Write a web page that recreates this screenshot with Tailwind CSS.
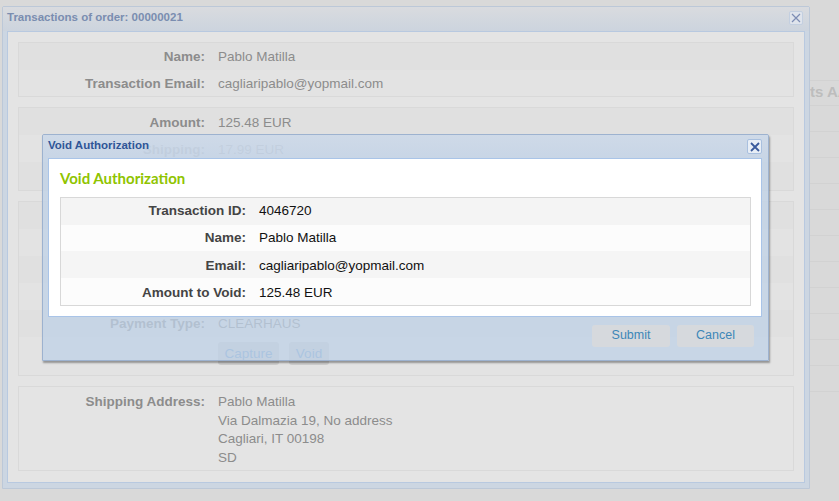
<!DOCTYPE html>
<html>
<head>
  <meta charset="UTF-8">
  <title>Void Authorization</title>
  <script src="https://cdn.jsdelivr.net/npm/@tailwindcss/browser@4"></script>
</head>
<body class="relative w-[839px] h-[501px] overflow-hidden bg-[#d9d9d9] font-['Liberation_Sans',Arial,sans-serif] text-[13.5px]">
  <!-- Page behind the dialogs -->
  <div class="absolute left-[790px] top-[80px] w-[49px]">
    <div class="h-[26px] pl-[20px] border-t border-b border-[#d2d2d2] whitespace-nowrap overflow-hidden font-bold text-[15px] text-[#bdbdbd] leading-[22px]">ts AA</div>
    <div class="h-[26px] border-b border-[#d2d2d2]"></div>
    <div class="h-[26px] border-b border-[#d2d2d2]"></div>
    <div class="h-[26px] border-b border-[#d2d2d2]"></div>
    <div class="h-[26px] border-b border-[#d2d2d2]"></div>
    <div class="h-[26px] border-b border-[#d2d2d2]"></div>
    <div class="h-[26px] border-b border-[#d2d2d2]"></div>
    <div class="h-[26px] border-b border-[#d2d2d2]"></div>
    <div class="h-[26px] border-b border-[#d2d2d2]"></div>
    <div class="h-[26px] border-b border-[#d2d2d2]"></div>
    <div class="h-[26px] border-b border-[#d2d2d2]"></div>
    <div class="h-[26px] border-b border-[#d2d2d2]"></div>
  </div>

  <!-- Transactions dialog -->
  <div class="absolute left-[2px] top-[6px] w-[808px] h-[483px] flex flex-col rounded-t-[2px] border border-[#bcc8d8] bg-[#ccd6e2] px-[4px] pb-[5px]">
    <div class="h-[24px] -mx-[4px] px-[4px] pt-[3px] bg-gradient-to-b from-[#d9dbdf] to-[#ccd4de] flex items-start justify-between">
      <span class="text-[11.5px] leading-[14px] font-bold text-[#7a8db0]">Transactions of order: 00000021</span>
      <span class="mr-[2px] mt-[1px] w-[14px] h-[14px] rounded-[2px] border border-[#c3cfe0] bg-[#dfe4ec] flex items-center justify-center">
        <svg class="w-[10px] h-[10px]" viewBox="0 0 10 10" fill="none" stroke="#7d8db4" stroke-width="1.2"><path d="M1 1l8 8M9 1l-8 8"/></svg>
      </span>
    </div>
    <div class="flex-1 border border-[#b8c9e0] bg-[#e4e4e4] px-[10px] pt-[10px] flex flex-col gap-[10px] text-[#8c8c8c]">
      <div class="border border-[#d9d9d9] flex flex-col">
        <div class="h-[27px] pt-[2px] bg-[#e0e0e0] flex items-center"><b class="w-[186px] text-right">Name:</b><span class="ml-[13px]">Pablo Matilla</span></div>
        <div class="h-[26px] pt-[3px] bg-[#e3e3e3] flex items-center"><b class="w-[186px] text-right">Transaction Email:</b><span class="ml-[13px]">cagliaripablo@yopmail.com</span></div>
      </div>
      <div class="border border-[#d9d9d9] flex flex-col">
        <div class="h-[27px] pt-[3px] bg-[#e0e0e0] flex items-center"><b class="w-[186px] text-right">Amount:</b><span class="ml-[13px]">125.48 EUR</span></div>
        <div class="h-[27px] pt-[3px] bg-[#e3e3e3] flex items-center"><b class="w-[186px] text-right">Shipping:</b><span class="ml-[13px]">17.99 EUR</span></div>
        <div class="h-[28px] bg-[#e0e0e0]"></div>
      </div>
      <div class="border border-[#d9d9d9] flex flex-col">
        <div class="h-[27px] bg-[#e0e0e0]"></div>
        <div class="h-[27px] bg-[#e3e3e3]"></div>
        <div class="h-[27px] bg-[#e0e0e0]"></div>
        <div class="h-[27px] bg-[#e3e3e3]"></div>
        <div class="h-[27px] pt-[2px] bg-[#e0e0e0] flex items-center"><b class="w-[186px] text-right">Payment Type:</b><span class="ml-[13px]">CLEARHAUS</span></div>
        <div class="h-[38px] bg-[#e3e3e3] pl-[199px] pt-[5px] flex gap-[10px] items-start">
          <span class="w-[61px] h-[23px] rounded-[3px] bg-[#cecece] text-center leading-[24px] text-[#6f9ccc]">Capture</span>
          <span class="w-[40px] h-[23px] rounded-[3px] bg-[#cecece] text-center leading-[24px] text-[#6f9ccc]">Void</span>
        </div>
      </div>
      <div class="border border-[#d9d9d9] h-[85px] flex pt-[6px] leading-[18.5px]">
        <b class="w-[186px] text-right">Shipping Address:</b>
        <div class="ml-[13px]">
          <p>Pablo Matilla</p>
          <p>Via Dalmazia 19, No address</p>
          <p>Cagliari, IT 00198</p>
          <p>SD</p>
        </div>
      </div>
    </div>
  </div>

  <!-- Void Authorization dialog -->
  <div class="absolute left-[42px] top-[134px] w-[727px] h-[227px] flex flex-col rounded-t-[2px] border border-[#9db2cf] bg-[#bfd1e7]/75 shadow-[1px_2px_2px_rgba(0,0,0,0.35)] pl-[5px] pr-[6px]">
    <div class="h-[23px] -ml-[5px] -mr-[6px] pl-[5px] pr-[6px] pt-[3px] bg-gradient-to-b from-[#d3dce9]/60 to-[#c8d5e6]/60 flex items-start justify-between">
      <span class="text-[11.5px] leading-[14px] font-bold text-[#2f5597]">Void Authorization</span>
      <span class="mt-[1px] w-[15px] h-[15px] rounded-[2px] border border-[#a9c0df] bg-[#e8eef6] flex items-center justify-center">
        <svg class="w-[10px] h-[10px]" viewBox="0 0 10 10" fill="none" stroke="#3a5a9c" stroke-width="1.8"><path d="M1 1l8 8M9 1l-8 8"/></svg>
      </span>
    </div>
    <div class="h-[159px] border border-[#a9c4e8] bg-white pl-[11px] pr-[10px]">
      <h2 class="h-[38px] leading-[38px] font-['Lato',sans-serif] font-bold text-[15px] text-[#8fc400]">Void Authorization</h2>
      <div class="border border-[#d8d8d8] text-[#111]">
        <div class="h-[27px] bg-[#f4f4f4] flex items-center"><b class="w-[185px] text-right text-[#444]">Transaction ID:</b><span class="ml-[13px]">4046720</span></div>
        <div class="h-[26px] bg-[#fcfcfc] flex items-center"><b class="w-[185px] text-right text-[#444]">Name:</b><span class="ml-[13px]">Pablo Matilla</span></div>
        <div class="h-[27px] pt-[3px] bg-[#f5f5f5] flex items-center"><b class="w-[185px] text-right text-[#444]">Email:</b><span class="ml-[13px]">cagliaripablo@yopmail.com</span></div>
        <div class="h-[27px] pt-[3px] bg-[#fcfcfc] flex items-center"><b class="w-[185px] text-right text-[#444]">Amount to Void:</b><span class="ml-[13px]">125.48 EUR</span></div>
      </div>
    </div>
    <div class="flex justify-end gap-[7px] pt-[8px] pr-[8px] text-[12.5px] text-[#3d87b8]">
      <span class="w-[78px] h-[22px] rounded-[3px] bg-[#d6d9dd] text-center leading-[20px]">Submit</span>
      <span class="w-[77px] h-[22px] rounded-[3px] bg-[#d6d9dd] text-center leading-[20px]">Cancel</span>
    </div>
  </div>
</body>
</html>
